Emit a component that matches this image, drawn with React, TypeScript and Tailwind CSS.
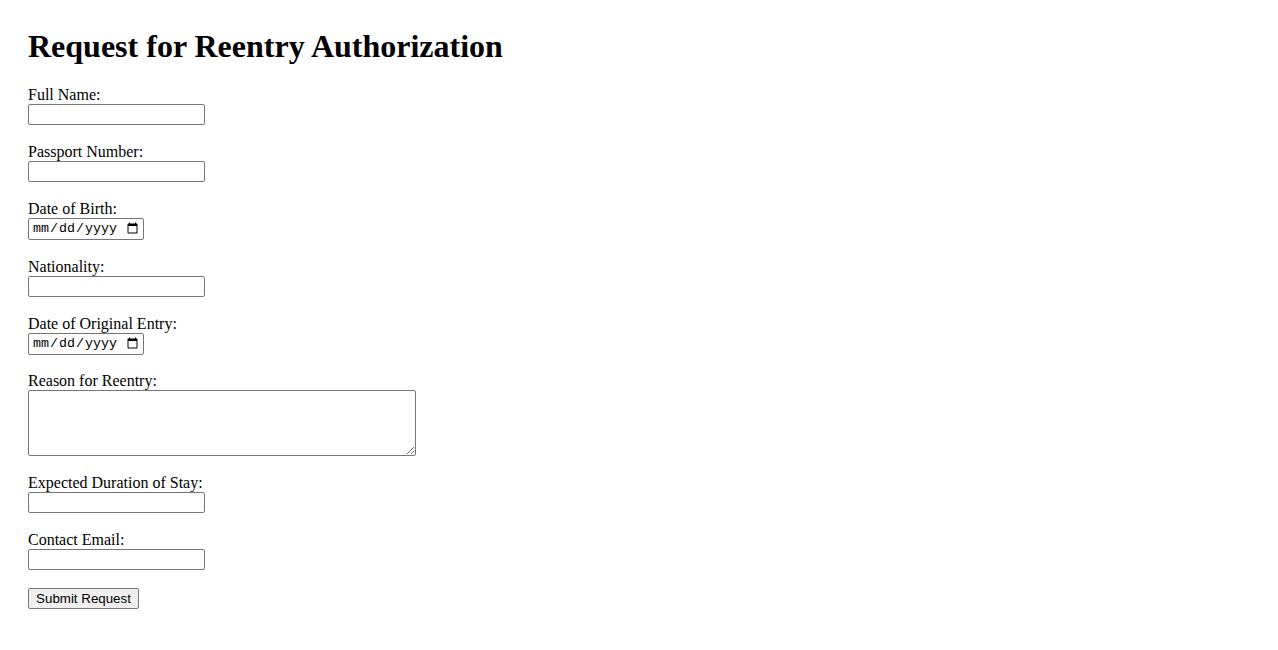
export default function App() {
  const field = "block w-[177px] h-[21px] border border-[#767676] rounded-[2px] px-[2px] bg-white text-[13.33px] font-['Liberation_Sans',sans-serif]"
  const dateField = "block w-[116px] h-[22px] border border-[#767676] rounded-[2px] pl-[3px] pr-[2px] bg-white text-[13.33px] font-['Liberation_Mono',monospace]"
  const label = "block h-[18px] leading-[18px] text-[16px]"

  return (
    <div className="min-h-[650px] bg-white pt-[28px] pl-[28px] font-['Liberation_Serif',serif] text-black">
      <h1 className="text-[32px] font-bold leading-[37px] mb-[21px]">Request for Reentry Authorization</h1>
      <form onSubmit={(e) => e.preventDefault()} className="flex flex-col gap-[18px]">
        <div>
          <label className={label}>Full Name:</label>
          <input type="text" className={field} />
        </div>
        <div>
          <label className={label}>Passport Number:</label>
          <input type="text" className={field} />
        </div>
        <div>
          <label className={label}>Date of Birth:</label>
          <input type="date" className={dateField} />
        </div>
        <div>
          <label className={label}>Nationality:</label>
          <input type="text" className={field} />
        </div>
        <div>
          <label className={label}>Date of Original Entry:</label>
          <input type="date" className={dateField} />
        </div>
        <div className="-mt-[1px]">
          <label className={label}>Reason for Reentry:</label>
          <textarea className="block w-[388px] h-[66px] border border-[#767676] rounded-[2px] p-[2px] bg-white text-[13.33px] font-['Liberation_Mono',monospace] resize" />
        </div>
        <div>
          <label className={label}>Expected Duration of Stay:</label>
          <input type="text" className={field} />
        </div>
        <div>
          <label className={label}>Contact Email:</label>
          <input type="email" className={field} />
        </div>
        <div>
          <button type="submit" className="block h-[21px] w-[111px] border border-[#767676] rounded-[2px] bg-[#efefef] text-[13.33px] leading-[17px] font-['Liberation_Sans',sans-serif] text-black">
            Submit Request
          </button>
        </div>
      </form>
    </div>
  )
}
